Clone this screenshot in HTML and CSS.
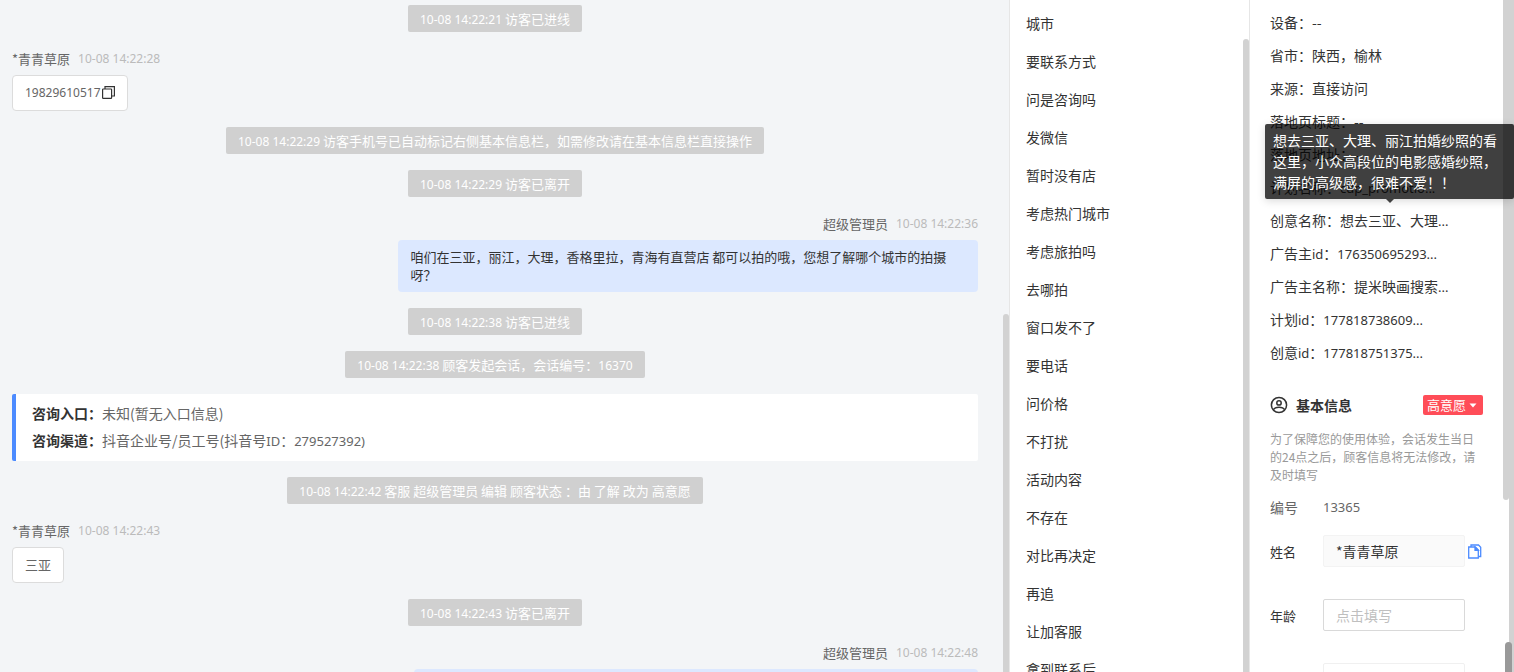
FILE: index.html
```html
<!DOCTYPE html>
<html lang="zh-CN">
<head>
    <meta charset="UTF-8">
    <title>客服会话</title>
    <link rel="stylesheet" href="styles.css">
</head>
<body>

<div class="page">
    <!-- 会话记录-->
    <main class="chat">
        <div class="tip"><span class="num">10-08 14:22:21</span> 访客已进线</div>

        <div class="msg">
            <div class="msg-head"><span>*青青草原</span><span class="num time">10-08 14:22:28</span></div>
            <div class="bubble"><span class="num">19829610517</span><button class="icon-btn" type="button" aria-label="复制"><svg width="14" height="14" viewBox="0 0 14 14" fill="none" stroke="#333" stroke-width="1.2"><rect x="1.600" y="3" width="9" height="9.400" rx="0.600"/><path d="M4 3V0.600h9.400V10H10.600"/></svg></button></div>
        </div>

        <div class="tip"><span class="num">10-08 14:22:29</span> 访客手机号已自动标记右侧基本信息栏，如需修改请在基本信息栏直接操作</div>
        <div class="tip"><span class="num">10-08 14:22:29</span> 访客已离开</div>

        <div class="msg msg-right">
            <div class="msg-head"><span>超级管理员</span><span class="num time">10-08 14:22:36</span></div>
            <div class="bubble bubble-blue">咱们在三亚，丽江，大理，香格里拉，青海有直营店 都可以拍的哦，您想了解哪个城市的拍摄呀？</div>
        </div>

        <div class="tip"><span class="num">10-08 14:22:38</span> 访客已进线</div>
        <div class="tip"><span class="num">10-08 14:22:38</span> 顾客发起会话，会话编号：<span class="num">16370</span></div>

        <dl class="card">
            <div class="card-row"><dt>咨询入口：</dt><dd>未知(暂无入口信息)</dd></div>
            <div class="card-row"><dt>咨询渠道：</dt><dd>抖音企业号/员工号(抖音号<span class="num-lg">ID</span>：<span class="num-lg">279527392)</span></dd></div>
        </dl>

        <div class="tip"><span class="num">10-08 14:22:42</span> 客服 超级管理员 编辑 顾客状态 ：由 了解 改为 高意愿</div>

        <div class="msg">
            <div class="msg-head"><span>*青青草原</span><span class="num time">10-08 14:22:43</span></div>
            <div class="bubble">三亚</div>
        </div>

        <div class="tip"><span class="num">10-08 14:22:43</span> 访客已离开</div>

        <div class="msg msg-right">
            <div class="msg-head"><span>超级管理员</span><span class="num time">10-08 14:22:48</span></div>
            <div class="bubble bubble-blue bubble-last"></div>
        </div>
        <div class="bar bar-chat"></div>
    </main>

    <!-- 快捷话术-->
    <nav class="words">
        <ul>
            <li>城市</li>
            <li>要联系方式</li>
            <li>问是咨询吗</li>
            <li>发微信</li>
            <li>暂时没有店</li>
            <li>考虑热门城市</li>
            <li>考虑旅拍吗</li>
            <li>去哪拍</li>
            <li>窗口发不了</li>
            <li>要电话</li>
            <li>问价格</li>
            <li>不打扰</li>
            <li>活动内容</li>
            <li>不存在</li>
            <li>对比再决定</li>
            <li>再追</li>
            <li>让加客服</li>
            <li>拿到联系后</li>
        </ul>
        <div class="bar bar-words"></div>
    </nav>

    <!-- 访客信息-->
    <aside class="info">
        <ul class="source">
            <li>设备：--</li>
            <li>省市：陕西，榆林</li>
            <li>来源：直接访问</li>
            <li>落地页标题：--</li>
            <li>落地页地址：--</li>
            <li>计划名称：<span class="num-lg">cdp_promotio...</span></li>
            <li class="has-pop">创意名称：想去三亚、大理<span class="num-lg">...</span>
                <div class="pop" role="tooltip">想去三亚、大理、丽江拍婚纱照的看这里，小众高段位的电影感婚纱照，满屏的高级感，很难不爱！！</div>
            </li>
            <li>广告主<span class="num-lg">id</span>：<span class="num-lg">176350695293...</span></li>
            <li>广告主名称：提米映画搜索<span class="num-lg">...</span></li>
            <li>计划<span class="num-lg">id</span>：<span class="num-lg">177818738609...</span></li>
            <li>创意<span class="num-lg">id</span>：<span class="num-lg">177818751375...</span></li>
        </ul>

        <div class="title">
            <svg width="18" height="18" viewBox="0 0 18 18" fill="none" stroke="#333" stroke-width="1.5"><circle cx="9" cy="9" r="7.6"/><circle cx="9" cy="6.900" r="2.2"/><path d="M3.400 13.700c1-1.900 2.400-2.500 5.600-2.500s4.600.6 5.600 2.500"/></svg>
            <h2>基本信息</h2>
            <div class="level">
                <select aria-label="顾客状态">
                    <option>高意愿</option>
                </select>
                <svg class="caret" width="8" height="5" viewBox="0 0 8 5"><path d="M0.500 0.500h7L4 4.500z" fill="#fff"/></svg>
            </div>
        </div>
        <p class="note">为了保障您的使用体验，会话发生当日的24点之后，顾客信息将无法修改，请及时填写</p>

        <form class="form">
            <div class="field field-no"><span class="label">编号</span><span class="num-lg">13365</span></div>
            <div class="field">
                <label class="label" for="name">姓名</label>
                <input class="filled" id="name" type="text" value="*青青草原">
                <button class="icon-btn" type="button" aria-label="复制姓名"><svg width="14" height="16" viewBox="0 0 14 16" fill="none" stroke="#4c8bff" stroke-width="1.300"><path d="M0.700 4h6.600L10.300 7V15H0.700z"/><path d="M7 4v3.300h3.300z" fill="#4c8bff"/><path d="M3 4V2h7.500L12.700 4.200v9.300h-2.400"/></svg></button>
            </div>
            <div class="field">
                <label class="label" for="age">年龄</label>
                <input id="age" type="text" placeholder="点击填写">
            </div>
            <div class="field">
                <input class="plain" type="text" aria-label="其他">
            </div>
        </form>
        <div class="bar bar-track"></div>
        <div class="bar bar-info"></div>
        <div class="bar bar-dark"></div>
    </aside>
</div>

</body>
</html>
```
FILE: styles.css
```css
* {
    margin: 0;
    padding: 0;
    box-sizing: border-box;
}

body, html {
    height: 100%;
    overflow: hidden;
}

body, input, button, select {
    font-family: "Noto Sans CJK SC", sans-serif;
    font-size: 14px;
    color: #333;
}

li {
    list-style: none;
}

/* 数字和英文 */
.num {
    font-family: "Noto Sans", sans-serif;
    font-size: 12px;
}

.num-lg {
    font-family: "Noto Sans", sans-serif;
    font-size: 13px;
}

.page {
    display: flex;
    height: 100%;
}

/* 滚动条 */
.bar {
    position: absolute;
    width: 6px;
    background: #d2d2d2;
}

/* 会话 */
.chat {
    position: relative;
    flex: 1;
    min-width: 0;
    display: flex;
    flex-direction: column;
    gap: 16px;
    padding: 5px 31px 0 12px;
    background: #f3f5f7;
    border-right: 1px solid #e6e6e6;
    overflow: hidden;
    font-size: 13px;
}

.chat > * {
    flex-shrink: 0;
}

.bar-chat {
    top: 314px;
    bottom: 0;
    right: 0;
    border-radius: 3px 3px 0 0;
}

.tip {
    align-self: center;
    height: 27px;
    padding: 0 12px;
    line-height: 27px;
    color: #fff;
    background: #d0d0d0;
    border-radius: 2px;
}

.msg {
    display: flex;
    flex-direction: column;
    align-items: flex-start;
    gap: 6px;
}

.msg-right {
    align-items: flex-end;
}

.msg-head {
    display: flex;
    gap: 8px;
    line-height: 21px;
    color: #666;
}

.time {
    color: #bbb;
}

.bubble {
    display: flex;
    align-items: center;
    padding: 8px 12px;
    line-height: 18px;
    color: #666;
    background: #fff;
    border: 1px solid #dcdcdc;
    border-radius: 4px;
}

.msg:not(.msg-right) .bubble {
    height: 36px;
}

.bubble-blue {
    max-width: 60%;
    color: #333;
    background: #dce8ff;
    border: none;
}

.bubble-last {
    width: 564px;
    height: 34px;
}

.icon-btn {
    display: flex;
    background: none;
    border: none;
    cursor: pointer;
}

.card {
    padding: 6px 16px 7px;
    background: #fff;
    border-left: 4px solid #4c8bff;
    border-radius: 2px;
    font-size: 14px;
}

.card-row {
    display: flex;
    height: 27px;
    line-height: 27px;
    color: #666;
}

.card-row dt {
    font-weight: bold;
    color: #333;
}

/* 快捷话术 */
.words {
    position: relative;
    flex: 0 0 240px;
    padding: 4px 16px 0;
    border-right: 1px solid #e6e6e6;
    overflow: hidden;
}

.words li {
    line-height: 38px;
}

.bar-words {
    top: 39px;
    bottom: 0;
    right: 0;
    border-radius: 3px 3px 0 0;
}

/* 访客信息 */
.info {
    position: relative;
    flex: 0 0 264px;
    padding: 6px 31px 0 20px;
    overflow: hidden;
}

.source li {
    height: 33px;
    line-height: 33px;
    white-space: nowrap;
}

.has-pop {
    position: relative;
}

.pop {
    position: absolute;
    z-index: 2;
    left: -5px;
    right: -31px;
    bottom: 38px;
    padding: 6px 8px;
    line-height: 21px;
    white-space: normal;
    color: #fff;
    background: rgba(0, 0, 0, 0.75);
    border-radius: 2px;
    box-shadow: 0 2px 8px rgba(0, 0, 0, 0.15);
}

.pop::after {
    content: "";
    position: absolute;
    top: 100%;
    left: 50%;
    margin-left: -4px;
    border: 4px solid transparent;
    border-top-color: #404040;
    border-bottom: none;
}

.title {
    display: flex;
    align-items: center;
    gap: 8px;
    height: 20px;
    margin: 26px 0 15px;
}

.title h2 {
    font-size: 14px;
    line-height: 20px;
}

.level {
    position: relative;
    margin-left: auto;
}

.level select {
    display: block;
    width: 60px;
    height: 20px;
    padding: 0 4px;
    font-size: 13px;
    line-height: 20px;
    color: #fff;
    background: #ff4d58;
    border: none;
    border-radius: 2px;
    appearance: none;
}

.caret {
    position: absolute;
    top: 8px;
    right: 6px;
    pointer-events: none;
}

.note {
    font-size: 12px;
    line-height: 18px;
    color: #999;
}

.form {
    display: flex;
    flex-direction: column;
    gap: 32px;
    padding-top: 7px;
}

.field {
    display: flex;
    align-items: center;
    height: 32px;
}

.label {
    width: 53px;
    font-size: 13px;
}

.field-no {
    margin-bottom: -20px;
    color: #666;
}

.field-no .label {
    font-size: 14px;
}

.field input {
    width: 142px;
    height: 32px;
    margin-right: 3px;
    padding: 0 12px;
    background: #fff;
    border: 1px solid #d9d9d9;
    border-radius: 2px;
}

.field input::placeholder {
    color: #bfbfbf;
}

.field .filled {
    background: #fafafa;
    border-color: #f3f3f3;
}

.field .plain {
    margin-left: 53px;
    border-color: #f0f0f0;
}

.bar-track {
    top: 0;
    bottom: 0;
    right: 0;
    width: 5px;
}

.bar-info {
    top: 0;
    right: 5px;
    height: 500px;
    border-radius: 0 0 3px 3px;
}

.bar-dark {
    top: 642px;
    bottom: 0;
    right: 2px;
    width: 7px;
    background: #999;
    border-radius: 4px 4px 0 0;
}
```
